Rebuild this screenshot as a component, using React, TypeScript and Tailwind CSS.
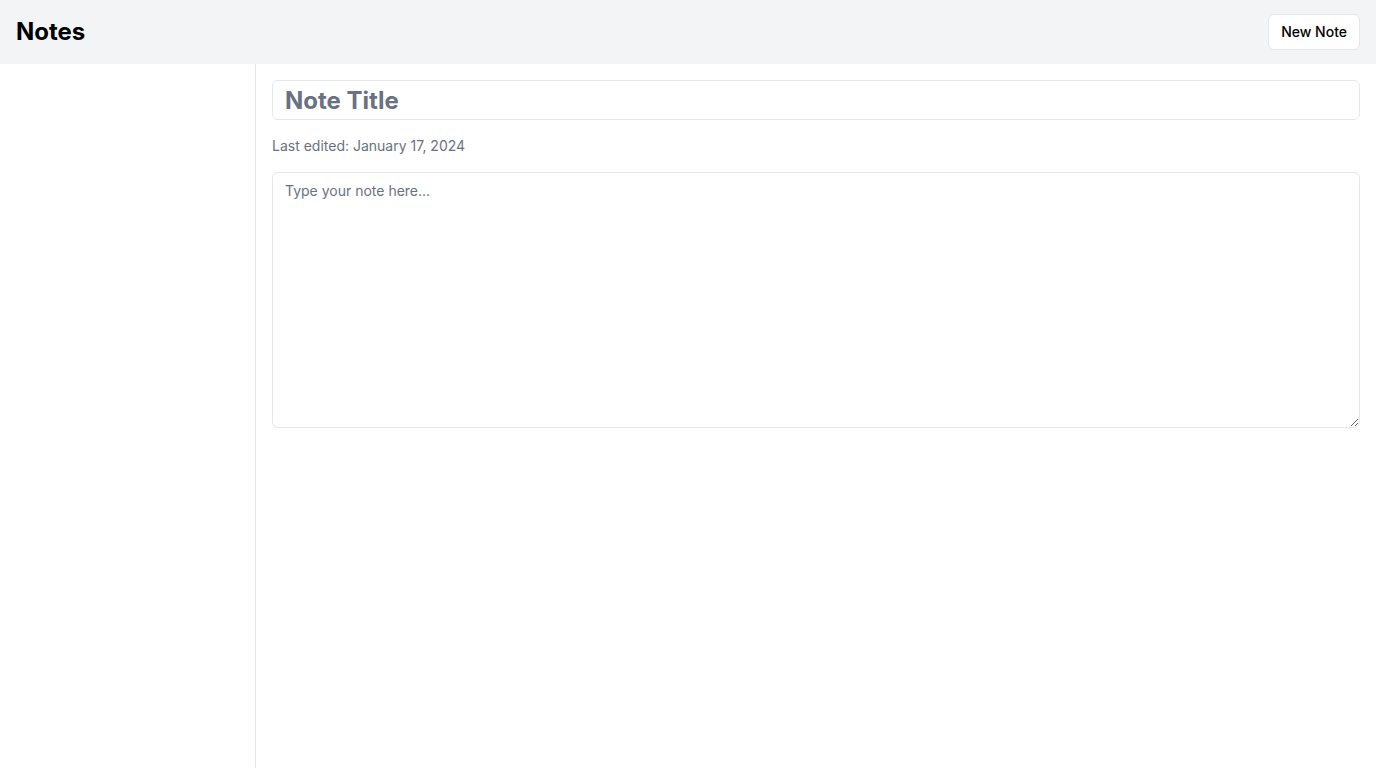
import { useState } from 'react';

export default function App() {
  const [title, setTitle] = useState('');
  const [body, setBody] = useState('');

  return (
    <div className="flex h-screen flex-col bg-white font-['Inter',sans-serif] text-black">
      <header className="flex h-16 shrink-0 items-center justify-between bg-gray-100 px-4">
        <h1 className="text-2xl font-bold">Notes</h1>
        <button className="h-9 rounded-md border border-gray-200 bg-white px-3 text-sm font-medium">
          New Note
        </button>
      </header>

      <div className="flex min-h-0 flex-1">
        <aside className="w-64 shrink-0 border-r border-gray-200" />

        <main className="flex-1 p-4">
          <input
            value={title}
            onChange={(e) => setTitle(e.target.value)}
            placeholder="Note Title"
            className="block h-10 w-full rounded-md border border-gray-200 px-3 text-2xl font-bold placeholder:text-gray-500 focus:outline-none"
          />
          <p className="mt-4 text-sm text-gray-500">Last edited: January 17, 2024</p>
          <textarea
            value={body}
            onChange={(e) => setBody(e.target.value)}
            placeholder="Type your note here..."
            className="mt-4 block h-64 w-full rounded-md border border-gray-200 px-3 py-2 text-sm placeholder:text-gray-500 focus:outline-none"
          />
        </main>
      </div>
    </div>
  );
}
